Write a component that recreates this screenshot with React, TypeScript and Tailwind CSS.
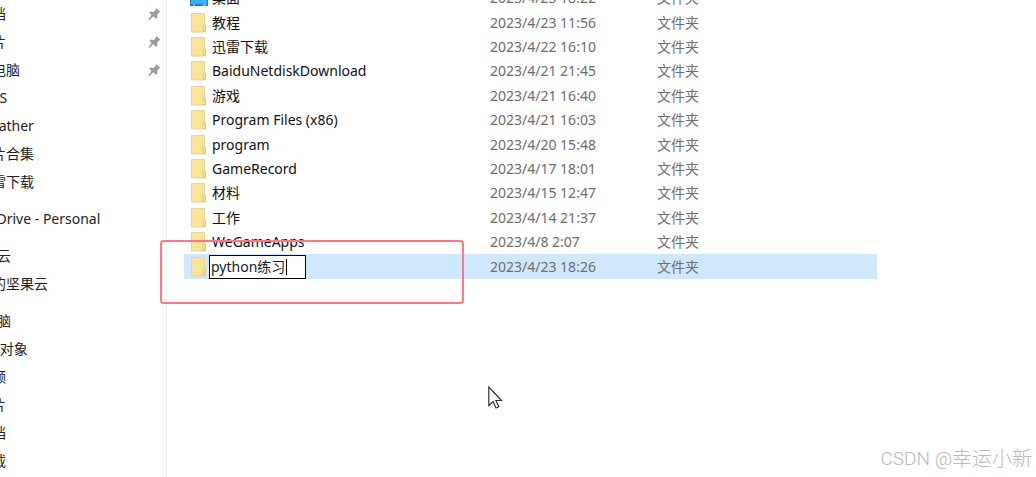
interface FileRow {
  name: string;
  date: string;
  icon?: "desktop" | "folder";
  editing?: boolean;
}

interface NavItem {
  label: string;
  root?: boolean;
  pinned?: boolean;
}

const navGroups: NavItem[][] = [
  [
    { label: "文档", pinned: true },
    { label: "图片", pinned: true },
    { label: "此电脑", pinned: true },
    { label: "WPS" },
    { label: "Weather" },
    { label: "图片合集" },
    { label: "迅雷下载" },
  ],
  [{ label: "OneDrive - Personal", root: true }],
  [{ label: "坚果云", root: true }, { label: "我的坚果云" }],
  [
    { label: "此电脑", root: true },
    { label: "3D 对象" },
    { label: "视频" },
    { label: "图片" },
    { label: "文档" },
    { label: "下载" },
  ],
];

const files: FileRow[] = [
  { name: "桌面", date: "2023/4/23 18:22", icon: "desktop" },
  { name: "教程", date: "2023/4/23 11:56" },
  { name: "迅雷下载", date: "2023/4/22 16:10" },
  { name: "BaiduNetdiskDownload", date: "2023/4/21 21:45" },
  { name: "游戏", date: "2023/4/21 16:40" },
  { name: "Program Files (x86)", date: "2023/4/21 16:03" },
  { name: "program", date: "2023/4/20 15:48" },
  { name: "GameRecord", date: "2023/4/17 18:01" },
  { name: "材料", date: "2023/4/15 12:47" },
  { name: "工作", date: "2023/4/14 21:37" },
  { name: "WeGameApps", date: "2023/4/8 2:07" },
  { name: "python练习", date: "2023/4/23 18:26", editing: true },
];

export default function App() {
  return (
    <div className="relative flex min-h-screen overflow-hidden bg-white font-['Noto_Sans','Noto_Sans_CJK_SC',sans-serif] text-sm text-[#222]">
      <Sidebar />
      <main className="min-w-0 flex-1">
        <FileTable />
      </main>

      {/* marks the folder being renamed */}
      <div className="pointer-events-none absolute top-60 left-40 h-16 w-[304px] rounded border-2 border-[#ff7682]" />
      <Cursor />
      <p className="absolute right-1 bottom-1 flex items-center text-[19px] leading-7 whitespace-pre text-[#b9b9b9] font-['Roboto','Noto_Sans_CJK_SC',sans-serif] font-light">
        CSDN @<span className="text-xl leading-7">幸运小新</span>
      </p>
    </div>
  );
}

function Sidebar() {
  return (
    <nav className="w-[167px] shrink-0 overflow-hidden border-r border-[#f0f0f0]">
      <div className="flex flex-col gap-[9px]">
        {navGroups.map((group, index) => (
          <ul key={index}>
            {group.map((item) => (
              <li key={item.label} className="flex h-7 items-center justify-between pr-[5px]">
                <a
                  href="#"
                  className={`whitespace-nowrap ${item.root ? "-ml-[31px]" : "-ml-[22px]"}`}
                >
                  {item.label}
                </a>
                {item.pinned && <PinIcon />}
              </li>
            ))}
          </ul>
        ))}
      </div>
    </nav>
  );
}

function FileTable() {
  return (
    <div className="-mt-[14px] mr-[159px] ml-[17px]">
      <table className="h-[293px] w-full table-fixed text-left">
        <colgroup>
          <col className="w-[306px]" />
          <col className="w-[167px]" />
          <col />
        </colgroup>
        <tbody>
          {files.map((file) => (
            <tr key={file.name} className={file.editing ? "bg-[#cfe8fd]" : ""}>
              <td className="p-0">
                <div className="flex items-center pl-[7px]">
                  {file.icon === "desktop" ? <DesktopIcon /> : <FolderIcon />}
                  {file.editing ? (
                    <div className="ml-[3px] flex h-6 w-[97px] items-center border border-black bg-white pl-px">
                      <input
                        aria-label="文件夹名称"
                        defaultValue={file.name}
                        className="w-[75px] bg-transparent outline-none"
                      />
                      <span className="h-4 w-px bg-black" />
                    </div>
                  ) : (
                    <span className="ml-1.5 leading-6 text-[#111]">{file.name}</span>
                  )}
                </div>
              </td>
              <td className="p-0 text-[#6d6d6d]">{file.date}</td>
              <td className="p-0 text-[#6d6d6d]">文件夹</td>
            </tr>
          ))}
        </tbody>
      </table>
    </div>
  );
}

function FolderIcon() {
  return (
    <svg width="15" height="20" viewBox="0 0 15 20" className="shrink-0">
      <path d="M.5.5h13v11l1 1v6.500H.5z" fill="#fae596" stroke="#e3d6a0" />
      <path d="M12 18.500v-6l1.200-1.500 1.300 1.500v6z" fill="#f7e08c" stroke="#d9c179" strokeWidth=".8" />
    </svg>
  );
}

function DesktopIcon() {
  return (
    <svg width="18" height="18" viewBox="0 0 18 18" className="-mr-[2px] -ml-px shrink-0">
      <path d="M0 2h18v15H0z" fill="#1c7fc4" />
      <path d="M1 3h16v12H1z" fill="#35b3f2" />
      <path d="M3 16h2M13 16h3" stroke="#bfe4f8" />
    </svg>
  );
}

function PinIcon() {
  return (
    <svg width="13" height="14" viewBox="0 0 13 14" className="shrink-0">
      <path
        d="M8.300 1 12.300 4.800l-1.200.8-2 2.200.3 2.900-1.400 1.100-2.700-2.600L1.300 13l-.9-.6 3.200-4.300-2.200-2.300L2.700 4.600l3 .3 1.900-1.900z"
        fill="#979c9f"
      />
    </svg>
  );
}

function Cursor() {
  return (
    <svg
      width="16"
      height="24"
      viewBox="0 0 16 24"
      className="pointer-events-none absolute top-[386px] left-[488px]"
    >
      <path
        d="M.8 1v18.500l4.200-4 3 6.500 2.800-1.300-2.900-6.200h5.600z"
        fill="#fff"
        stroke="#333"
        strokeWidth="1.200"
      />
    </svg>
  );
}
